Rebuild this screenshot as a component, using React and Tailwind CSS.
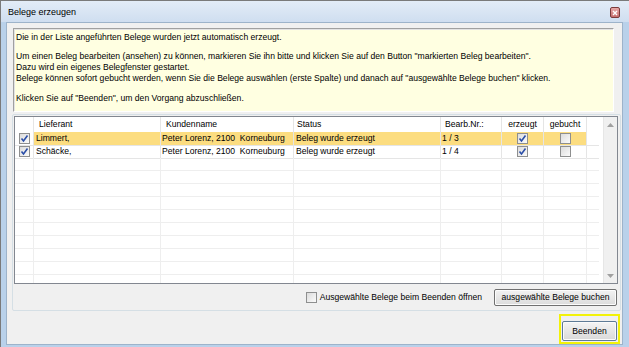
import { useState } from "react";

const belege = [
  { id: 1, lieferant: "Limmert,", kunde: "Peter Lorenz, 2100  Korneuburg", status: "Beleg wurde erzeugt", nr: "1 / 3" },
  { id: 2, lieferant: "Schäcke,", kunde: "Peter Lorenz, 2100  Korneuburg", status: "Beleg wurde erzeugt", nr: "1 / 4" },
];

const cols = "grid grid-cols-[19px_127px_133px_147px_61px_42px_43px_12px]";

function Check({ checked, onChange }) {
  return (
    <button
      onClick={onChange}
      className="w-[11px] h-[11px] border border-[#8e8f8f] bg-gradient-to-br from-[#dcdcdc] to-[#fbfbfb] flex items-center justify-center p-0"
    >
      {checked && (
        <svg width="9" height="9" viewBox="0 0 9 9">
          <path d="M1.5 4.5 L3.5 7 L7.5 1.5" stroke="#2a4ea8" strokeWidth="1.6" fill="none" />
        </svg>
      )}
    </button>
  );
}

export default function App() {
  const [auswahl, setAuswahl] = useState({ 1: true, 2: true });
  const [oeffnen, setOeffnen] = useState(false);
  const [markiert, setMarkiert] = useState(1);

  const leer = Array.from({ length: 10 });

  return (
    <div className="w-[629px] h-[347px] bg-[#b9d1ea] border-l border-t border-[#7a7a7a] flex flex-col font-['Liberation_Sans',Arial,sans-serif] text-black overflow-hidden">
      <div className="h-[21px] shrink-0 bg-gradient-to-b from-[#e3ecf7] to-[#cfdef0] flex items-center justify-between pl-[7px] pr-[9px]">
        <span className="text-[9px] pt-[3px]">Belege erzeugen</span>
        <div className="w-[10px] h-[11px] rounded-[2px] border border-[#7a3b3b] bg-gradient-to-b from-[#e6a8a8] to-[#c66e6e] flex items-center justify-center mt-[2px]">
          <svg width="6" height="6" viewBox="0 0 6 6">
            <path d="M1 1 L5 5 M5 1 L1 5" stroke="#fff" strokeWidth="1.4" />
          </svg>
        </div>
      </div>

      <div className="flex-1 ml-[5px] mr-[6px] mb-[6px] bg-[#f0f0f0] border border-[#9db3ca] flex flex-col pl-[5px] pr-[1px] pt-[5px]">
        <div className="ml-[1px] mr-[7px] h-[84px] bg-[#ffffe1] border border-[#a0a0a0] border-r-white border-b-white shadow-[inset_1px_1px_0_#e3e3e3] pl-[2px] pt-[3px] text-[8.6px] leading-[11px]">
          <p>Die in der Liste angeführten Belege wurden jetzt automatisch erzeugt.</p>
          <div className="h-[8px]" />
          <p>Um einen Beleg bearbeiten (ansehen) zu können, markieren Sie ihn bitte und klicken Sie auf den Button "markierten Beleg bearbeiten".</p>
          <p>Dazu wird ein eigenes Belegfenster gestartet.</p>
          <p>Belege können sofort gebucht werden, wenn Sie die Belege auswählen (erste Spalte) und danach auf "ausgewählte Belege buchen" klicken.</p>
          <div className="h-[9px]" />
          <p>Klicken Sie auf "Beenden", um den Vorgang abzuschließen.</p>
        </div>

        <div className="mt-[2px] border border-[#d5dfe5] rounded-[2px] pl-[1px] pr-[2px] pt-[1px] pb-[2px] flex flex-col">
          <div className="h-[168px] bg-white border border-[#828790] flex overflow-hidden text-[8.6px]">
            <div className="flex-1 flex flex-col overflow-hidden">
              <div className={`${cols} h-[15px] shrink-0`}>
                <div className="border-r border-[#e5e5e5]" />
                <div className="border-r border-[#e5e5e5] pl-[5px] leading-[15px]">Lieferant</div>
                <div className="border-r border-[#e5e5e5] pl-[5px] leading-[15px]">Kundenname</div>
                <div className="border-r border-[#e5e5e5] pl-[3px] leading-[15px]">Status</div>
                <div className="border-r border-[#e5e5e5] pl-[4px] leading-[15px]">Bearb.Nr.:</div>
                <div className="border-r border-[#e5e5e5] text-center leading-[15px]">erzeugt</div>
                <div className="border-r border-[#e5e5e5] text-center leading-[15px]">gebucht</div>
                <div />
              </div>
              {belege.map((b) => {
                const hl = markiert === b.id;
                const cell = `border-r border-b border-[#e5e5e5] leading-[13px] ${hl ? "bg-[#fcdd80]" : ""}`;
                return (
                  <div key={b.id} className={`${cols} h-[13px] shrink-0`} onClick={() => setMarkiert(b.id)}>
                    <div className="border-r border-b border-[#e5e5e5] flex items-center justify-center">
                      <Check checked={auswahl[b.id]} onChange={() => setAuswahl({ ...auswahl, [b.id]: !auswahl[b.id] })} />
                    </div>
                    <div className={`${cell} pl-[2px]`}>{b.lieferant}</div>
                    <div className={`${cell} pl-[1px] whitespace-pre`}>{b.kunde}</div>
                    <div className={`${cell} pl-[2px]`}>{b.status}</div>
                    <div className={`${cell} pl-[1px]`}>{b.nr}</div>
                    <div className={`${cell} flex items-center justify-center`}>
                      <Check checked />
                    </div>
                    <div className={`${cell} flex items-center justify-center`}>
                      <Check checked={false} />
                    </div>
                    <div className="border-b border-[#e5e5e5]" />
                  </div>
                );
              })}
              {leer.map((_, i) => (
                <div key={i} className={`${cols} h-[13px] shrink-0`}>
                  <div className="border-r border-b border-[#eeeeee]" />
                  <div className="border-r border-b border-[#eeeeee]" />
                  <div className="border-r border-b border-[#eeeeee]" />
                  <div className="border-r border-b border-[#eeeeee]" />
                  <div className="border-r border-b border-[#eeeeee]" />
                  <div className="border-r border-b border-[#eeeeee]" />
                  <div className="border-r border-b border-[#eeeeee]" />
                  <div className="border-b border-[#eeeeee]" />
                </div>
              ))}
            </div>
            <div className="w-[14px] shrink-0 bg-[#f0f0f0] border-l border-[#e6e6e6] flex flex-col justify-between items-center pt-[6px] pb-[5px]">
              <svg width="7" height="4" viewBox="0 0 7 4">
                <path d="M0 4 L3.5 0 L7 4 Z" fill="#a0a0a0" />
              </svg>
              <svg width="7" height="4" viewBox="0 0 7 4">
                <path d="M0 0 L3.5 4 L7 0 Z" fill="#a0a0a0" />
              </svg>
            </div>
          </div>

          <div className="flex items-center justify-end gap-[12px] mt-[5px] mb-[2px] mr-[1px] text-[8.6px]">
            <label className="flex items-center gap-[3px]">
              <Check checked={oeffnen} onChange={() => setOeffnen(!oeffnen)} />
              <span>Ausgewählte Belege beim Beenden öffnen</span>
            </label>
            <button className="w-[123px] h-[17px] border border-[#707070] rounded-[2px] bg-gradient-to-b from-[#f2f2f2] to-[#dcdcdc] shadow-[inset_0_0_0_1px_#fcfcfc] leading-none">
              ausgewählte Belege buchen
            </button>
          </div>
        </div>

        <div className="flex justify-end mt-[3px] mr-[1px]">
          <div className="border-[2px] border-[#f2f20a] p-[1px]">
            <button className="w-[55px] h-[20px] border border-[#5e7b96] rounded-[2px] bg-gradient-to-b from-[#f4f4f4] to-[#d9d9d9] shadow-[inset_0_0_0_1px_#fbfbfb] text-[8.6px]">
              Beenden
            </button>
          </div>
        </div>
      </div>
    </div>
  );
}
